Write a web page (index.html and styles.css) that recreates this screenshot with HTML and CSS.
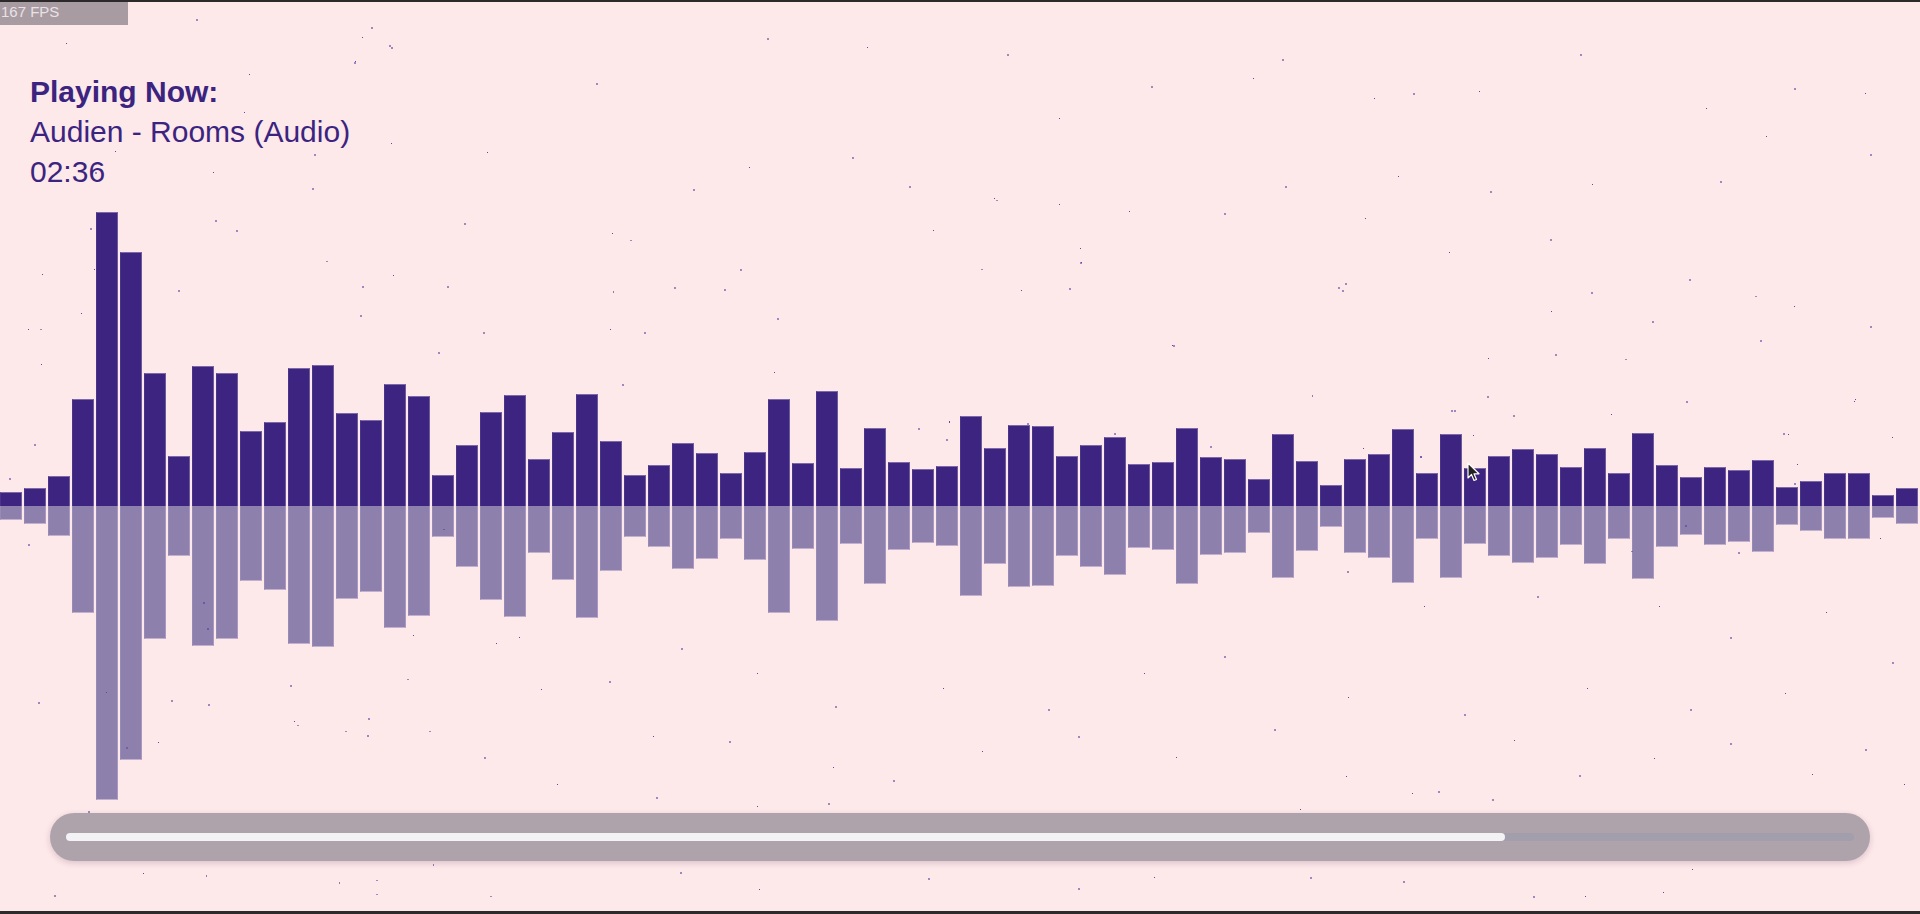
FILE: index.html
```html
<!DOCTYPE html>
<html lang="en">
<head>
<meta charset="utf-8">
<title>Visualizer</title>
<link rel="stylesheet" href="styles.css">
</head>
<body>
<main class="screen">
  <div class="fps">167 FPS</div>
  <section class="info">
    <div class="info-title">Playing Now:</div>
    <div class="info-track">Audien - Rooms (Audio)</div>
    <div class="info-time">02:36</div>
  </section>
  <section class="viz">
    <div class="bars bars-up">
      <div class="bar" style="height:14px"></div><div class="bar" style="height:18px"></div><div class="bar" style="height:30px"></div><div class="bar" style="height:107px"></div><div class="bar" style="height:294px"></div><div class="bar" style="height:254px"></div><div class="bar" style="height:133px"></div><div class="bar" style="height:50px"></div><div class="bar" style="height:140px"></div><div class="bar" style="height:133px"></div><div class="bar" style="height:75px"></div><div class="bar" style="height:84px"></div><div class="bar" style="height:138px"></div><div class="bar" style="height:141px"></div><div class="bar" style="height:93px"></div><div class="bar" style="height:86px"></div><div class="bar" style="height:122px"></div><div class="bar" style="height:110px"></div><div class="bar" style="height:31px"></div><div class="bar" style="height:61px"></div><div class="bar" style="height:94px"></div><div class="bar" style="height:111px"></div>
      <div class="bar" style="height:47px"></div><div class="bar" style="height:74px"></div><div class="bar" style="height:112px"></div><div class="bar" style="height:65px"></div><div class="bar" style="height:31px"></div><div class="bar" style="height:41px"></div><div class="bar" style="height:63px"></div><div class="bar" style="height:53px"></div><div class="bar" style="height:33px"></div><div class="bar" style="height:54px"></div><div class="bar" style="height:107px"></div><div class="bar" style="height:43px"></div><div class="bar" style="height:115px"></div><div class="bar" style="height:38px"></div><div class="bar" style="height:78px"></div><div class="bar" style="height:44px"></div><div class="bar" style="height:37px"></div><div class="bar" style="height:40px"></div><div class="bar" style="height:90px"></div><div class="bar" style="height:58px"></div><div class="bar" style="height:81px"></div><div class="bar" style="height:80px"></div>
      <div class="bar" style="height:50px"></div><div class="bar" style="height:61px"></div><div class="bar" style="height:69px"></div><div class="bar" style="height:42px"></div><div class="bar" style="height:44px"></div><div class="bar" style="height:78px"></div><div class="bar" style="height:49px"></div><div class="bar" style="height:47px"></div><div class="bar" style="height:27px"></div><div class="bar" style="height:72px"></div><div class="bar" style="height:45px"></div><div class="bar" style="height:21px"></div><div class="bar" style="height:47px"></div><div class="bar" style="height:52px"></div><div class="bar" style="height:77px"></div><div class="bar" style="height:33px"></div><div class="bar" style="height:72px"></div><div class="bar" style="height:38px"></div><div class="bar" style="height:50px"></div><div class="bar" style="height:57px"></div><div class="bar" style="height:52px"></div>
      <div class="bar" style="height:39px"></div><div class="bar" style="height:58px"></div><div class="bar" style="height:33px"></div><div class="bar" style="height:73px"></div><div class="bar" style="height:41px"></div><div class="bar" style="height:29px"></div><div class="bar" style="height:39px"></div><div class="bar" style="height:36px"></div><div class="bar" style="height:46px"></div><div class="bar" style="height:19px"></div><div class="bar" style="height:25px"></div><div class="bar" style="height:33px"></div><div class="bar" style="height:33px"></div><div class="bar" style="height:11px"></div><div class="bar" style="height:18px"></div>
    </div>
    <div class="bars bars-down">
      <div class="bar" style="height:14px"></div><div class="bar" style="height:18px"></div><div class="bar" style="height:30px"></div><div class="bar" style="height:107px"></div><div class="bar" style="height:294px"></div><div class="bar" style="height:254px"></div><div class="bar" style="height:133px"></div><div class="bar" style="height:50px"></div><div class="bar" style="height:140px"></div><div class="bar" style="height:133px"></div><div class="bar" style="height:75px"></div><div class="bar" style="height:84px"></div><div class="bar" style="height:138px"></div><div class="bar" style="height:141px"></div><div class="bar" style="height:93px"></div><div class="bar" style="height:86px"></div><div class="bar" style="height:122px"></div><div class="bar" style="height:110px"></div><div class="bar" style="height:31px"></div><div class="bar" style="height:61px"></div><div class="bar" style="height:94px"></div><div class="bar" style="height:111px"></div>
      <div class="bar" style="height:47px"></div><div class="bar" style="height:74px"></div><div class="bar" style="height:112px"></div><div class="bar" style="height:65px"></div><div class="bar" style="height:31px"></div><div class="bar" style="height:41px"></div><div class="bar" style="height:63px"></div><div class="bar" style="height:53px"></div><div class="bar" style="height:33px"></div><div class="bar" style="height:54px"></div><div class="bar" style="height:107px"></div><div class="bar" style="height:43px"></div><div class="bar" style="height:115px"></div><div class="bar" style="height:38px"></div><div class="bar" style="height:78px"></div><div class="bar" style="height:44px"></div><div class="bar" style="height:37px"></div><div class="bar" style="height:40px"></div><div class="bar" style="height:90px"></div><div class="bar" style="height:58px"></div><div class="bar" style="height:81px"></div><div class="bar" style="height:80px"></div>
      <div class="bar" style="height:50px"></div><div class="bar" style="height:61px"></div><div class="bar" style="height:69px"></div><div class="bar" style="height:42px"></div><div class="bar" style="height:44px"></div><div class="bar" style="height:78px"></div><div class="bar" style="height:49px"></div><div class="bar" style="height:47px"></div><div class="bar" style="height:27px"></div><div class="bar" style="height:72px"></div><div class="bar" style="height:45px"></div><div class="bar" style="height:21px"></div><div class="bar" style="height:47px"></div><div class="bar" style="height:52px"></div><div class="bar" style="height:77px"></div><div class="bar" style="height:33px"></div><div class="bar" style="height:72px"></div><div class="bar" style="height:38px"></div><div class="bar" style="height:50px"></div><div class="bar" style="height:57px"></div><div class="bar" style="height:52px"></div>
      <div class="bar" style="height:39px"></div><div class="bar" style="height:58px"></div><div class="bar" style="height:33px"></div><div class="bar" style="height:73px"></div><div class="bar" style="height:41px"></div><div class="bar" style="height:29px"></div><div class="bar" style="height:39px"></div><div class="bar" style="height:36px"></div><div class="bar" style="height:46px"></div><div class="bar" style="height:19px"></div><div class="bar" style="height:25px"></div><div class="bar" style="height:33px"></div><div class="bar" style="height:33px"></div><div class="bar" style="height:12px"></div><div class="bar" style="height:18px"></div>
    </div>
  </section>
  <section class="progress">
    <div class="track"><div class="fill" style="width:80.5%"></div></div>
  </section>

  <svg class="stars" width="1920" height="914" viewBox="0 0 1920 914" aria-hidden="true">
    <g fill="#5b4aa6">
      <rect x="196" y="19" width="2" height="2" opacity=".6"/><rect x="66" y="43" width="1" height="1"/><rect x="371" y="27" width="2" height="2" opacity=".6"/><rect x="362" y="37" width="1" height="1"/><rect x="391" y="47" width="2" height="2" opacity=".6"/><rect x="354" y="62" width="2" height="2" opacity=".6"/><rect x="249" y="74" width="1" height="1"/><rect x="244" y="112" width="1" height="1"/><rect x="115" y="151" width="1" height="1"/><rect x="314" y="154" width="2" height="2" opacity=".6"/><rect x="213" y="172" width="1" height="1"/><rect x="95" y="172" width="2" height="2" opacity=".6"/><rect x="391" y="143" width="1" height="1"/><rect x="312" y="188" width="2" height="2" opacity=".6"/>
      <rect x="9" y="478" width="2" height="2" opacity=".6"/><rect x="34" y="444" width="2" height="2" opacity=".6"/><rect x="42" y="274" width="1" height="1"/><rect x="28" y="329" width="1" height="1"/><rect x="40" y="329" width="2" height="1" opacity=".6"/><rect x="41" y="364" width="1" height="1"/><rect x="81" y="313" width="1" height="1"/><rect x="90" y="228" width="2" height="2" opacity=".6"/><rect x="94" y="269" width="1" height="1"/><rect x="178" y="290" width="2" height="2" opacity=".6"/><rect x="215" y="220" width="2" height="2" opacity=".6"/><rect x="236" y="230" width="2" height="2" opacity=".6"/><rect x="326" y="261" width="2" height="1" opacity=".6"/><rect x="362" y="286" width="2" height="2" opacity=".6"/><rect x="360" y="315" width="2" height="2" opacity=".6"/><rect x="393" y="275" width="1" height="1"/><rect x="447" y="286" width="2" height="2" opacity=".6"/><rect x="438" y="352" width="2" height="2" opacity=".6"/><rect x="464" y="223" width="2" height="2" opacity=".6"/><rect x="483" y="332" width="2" height="2" opacity=".6"/>
      <rect x="630" y="240" width="2" height="1" opacity=".6"/><rect x="613" y="291" width="1" height="2" opacity=".7"/><rect x="674" y="287" width="2" height="2" opacity=".6"/><rect x="724" y="289" width="2" height="2" opacity=".6"/><rect x="610" y="329" width="1" height="1"/><rect x="644" y="332" width="2" height="2" opacity=".6"/><rect x="622" y="384" width="2" height="2" opacity=".6"/><rect x="777" y="318" width="2" height="2" opacity=".6"/><rect x="774" y="372" width="1" height="1"/><rect x="981" y="269" width="2" height="1" opacity=".6"/><rect x="1021" y="290" width="1" height="1"/><rect x="996" y="200" width="2" height="1" opacity=".6"/><rect x="918" y="428" width="2" height="2" opacity=".6"/><rect x="949" y="421" width="1" height="2"/><rect x="946" y="439" width="2" height="2" opacity=".6"/><rect x="1027" y="423" width="2" height="2" opacity=".6"/>
      <rect x="1059" y="204" width="1" height="1"/><rect x="1224" y="213" width="2" height="2" opacity=".6"/><rect x="1365" y="218" width="1" height="1"/><rect x="1080" y="248" width="1" height="1"/><rect x="1081" y="262" width="1" height="1"/><rect x="1069" y="288" width="2" height="2" opacity=".6"/><rect x="1345" y="283" width="2" height="2" opacity=".6"/><rect x="1342" y="290" width="2" height="2" opacity=".6"/><rect x="1449" y="252" width="1" height="1"/><rect x="1550" y="239" width="2" height="2" opacity=".6"/><rect x="1173" y="345" width="2" height="2" opacity=".6"/><rect x="1312" y="395" width="1" height="2" opacity=".7"/><rect x="1488" y="358" width="1" height="1"/><rect x="1555" y="354" width="2" height="2" opacity=".6"/><rect x="1487" y="396" width="2" height="2" opacity=".6"/><rect x="1451" y="410" width="2" height="2" opacity=".6"/><rect x="1513" y="415" width="2" height="2" opacity=".6"/><rect x="1114" y="433" width="2" height="2" opacity=".6"/><rect x="1210" y="446" width="2" height="2" opacity=".6"/><rect x="1363" y="448" width="1" height="1"/><rect x="1420" y="456" width="2" height="2" opacity=".6"/><rect x="1473" y="435" width="1" height="1"/>
      <rect x="1591" y="292" width="2" height="2" opacity=".6"/><rect x="1689" y="279" width="2" height="2" opacity=".6"/><rect x="1755" y="296" width="2" height="1" opacity=".6"/><rect x="1760" y="340" width="2" height="2" opacity=".6"/><rect x="1625" y="359" width="2" height="1" opacity=".6"/><rect x="1686" y="401" width="2" height="2" opacity=".6"/><rect x="1611" y="414" width="1" height="1"/><rect x="1854" y="401" width="1" height="1"/><rect x="1788" y="434" width="1" height="1"/><rect x="1797" y="464" width="1" height="1"/><rect x="1794" y="483" width="2" height="2" opacity=".6"/><rect x="1454" y="410" width="2" height="2" opacity=".6"/><rect x="1420" y="456" width="2" height="2" opacity=".6"/>
      <rect x="28" y="544" width="2" height="2" opacity=".6"/><rect x="38" y="702" width="2" height="2" opacity=".6"/><rect x="106" y="692" width="1" height="1"/><rect x="126" y="747" width="2" height="2" opacity=".6"/><rect x="171" y="700" width="2" height="2" opacity=".6"/><rect x="203" y="602" width="2" height="2" opacity=".7"/><rect x="207" y="628" width="2" height="2" opacity=".7"/><rect x="290" y="685" width="2" height="2" opacity=".6"/><rect x="297" y="725" width="2" height="1" opacity=".6"/><rect x="345" y="731" width="2" height="1" opacity=".6"/><rect x="368" y="718" width="2" height="2" opacity=".6"/><rect x="407" y="679" width="2" height="1" opacity=".6"/><rect x="429" y="731" width="2" height="1" opacity=".6"/><rect x="443" y="529" width="2" height="1" opacity=".7"/><rect x="413" y="635" width="1" height="1"/><rect x="496" y="643" width="1" height="1"/><rect x="88" y="811" width="2" height="2" opacity=".6"/>
      <rect x="1738" y="552" width="2" height="2" opacity=".6"/><rect x="1880" y="538" width="1" height="1"/><rect x="1685" y="525" width="2" height="2" opacity=".7"/><rect x="1631" y="551" width="2" height="1" opacity=".6"/>
      <rect x="143" y="873" width="1" height="1"/><rect x="206" y="875" width="1" height="2" opacity=".7"/><rect x="54" y="895" width="2" height="2" opacity=".6"/><rect x="339" y="882" width="1" height="2" opacity=".7"/><rect x="376" y="880" width="2" height="1" opacity=".6"/><rect x="376" y="894" width="2" height="1" opacity=".6"/><rect x="490" y="896" width="2" height="1" opacity=".6"/><rect x="433" y="864" width="1" height="2" opacity=".7"/><rect x="1412" y="793" width="1" height="1"/><rect x="1492" y="799" width="2" height="2" opacity=".6"/><rect x="1300" y="809" width="1" height="1"/><rect x="1403" y="881" width="2" height="2" opacity=".6"/><rect x="1533" y="896" width="2" height="2" opacity=".6"/><rect x="1663" y="892" width="1" height="1"/>
      <rect x="389" y="45" width="2" height="2" opacity=".6"/><rect x="355" y="61" width="1" height="1"/><rect x="596" y="83" width="2" height="2" opacity=".6"/><rect x="487" y="152" width="1" height="1"/><rect x="767" y="38" width="2" height="2" opacity=".6"/><rect x="867" y="47" width="1" height="1"/><rect x="1007" y="54" width="2" height="2" opacity=".6"/><rect x="1059" y="118" width="1" height="1"/><rect x="1151" y="86" width="2" height="2" opacity=".6"/><rect x="1253" y="78" width="1" height="1"/><rect x="1282" y="59" width="2" height="2" opacity=".6"/><rect x="1374" y="98" width="1" height="1"/><rect x="1413" y="93" width="2" height="2" opacity=".6"/><rect x="1479" y="91" width="1" height="1"/><rect x="1580" y="54" width="2" height="2" opacity=".6"/><rect x="1706" y="108" width="1" height="1"/><rect x="1794" y="88" width="2" height="2" opacity=".6"/><rect x="1865" y="93" width="1" height="1"/><rect x="1870" y="154" width="2" height="2" opacity=".6"/><rect x="1766" y="136" width="1" height="1"/><rect x="1720" y="181" width="2" height="2" opacity=".6"/><rect x="1592" y="184" width="1" height="1"/><rect x="1490" y="191" width="2" height="2" opacity=".6"/><rect x="1398" y="176" width="1" height="1"/><rect x="1285" y="186" width="2" height="2" opacity=".6"/><rect x="1129" y="211" width="1" height="1"/><rect x="909" y="186" width="2" height="2" opacity=".6"/><rect x="994" y="198" width="1" height="1"/><rect x="852" y="157" width="2" height="2" opacity=".6"/><rect x="749" y="167" width="1" height="1"/><rect x="693" y="189" width="2" height="2" opacity=".6"/><rect x="612" y="233" width="1" height="1"/><rect x="740" y="269" width="2" height="2" opacity=".6"/><rect x="933" y="230" width="1" height="1"/><rect x="1080" y="262" width="2" height="2" opacity=".6"/><rect x="1172" y="345" width="1" height="1"/><rect x="1338" y="287" width="2" height="2" opacity=".6"/><rect x="1551" y="311" width="1" height="1"/><rect x="1652" y="321" width="2" height="2" opacity=".6"/><rect x="1794" y="306" width="1" height="1"/><rect x="1870" y="326" width="2" height="2" opacity=".6"/><rect x="1855" y="399" width="1" height="1"/><rect x="1783" y="433" width="2" height="2" opacity=".6"/><rect x="1892" y="437" width="1" height="1"/>
      <rect x="1347" y="571" width="2" height="2" opacity=".6"/><rect x="1424" y="606" width="1" height="1"/><rect x="1537" y="596" width="2" height="2" opacity=".6"/><rect x="1659" y="606" width="1" height="1"/><rect x="1730" y="637" width="2" height="2" opacity=".6"/><rect x="1826" y="612" width="1" height="1"/><rect x="1892" y="662" width="2" height="2" opacity=".6"/><rect x="1785" y="693" width="1" height="1"/><rect x="1690" y="709" width="2" height="2" opacity=".6"/><rect x="1587" y="688" width="1" height="1"/><rect x="1464" y="714" width="2" height="2" opacity=".6"/><rect x="1348" y="697" width="1" height="1"/><rect x="1224" y="656" width="2" height="2" opacity=".6"/><rect x="1144" y="673" width="1" height="1"/><rect x="1048" y="709" width="2" height="2" opacity=".6"/><rect x="943" y="688" width="1" height="1"/><rect x="835" y="706" width="2" height="2" opacity=".6"/><rect x="757" y="673" width="1" height="1"/><rect x="681" y="648" width="2" height="2" opacity=".6"/><rect x="653" y="736" width="1" height="1"/><rect x="729" y="741" width="2" height="2" opacity=".6"/><rect x="833" y="767" width="1" height="1"/><rect x="893" y="780" width="2" height="2" opacity=".6"/><rect x="982" y="751" width="1" height="1"/><rect x="1078" y="736" width="2" height="2" opacity=".6"/><rect x="1176" y="757" width="1" height="1"/><rect x="1274" y="729" width="2" height="2" opacity=".6"/><rect x="1346" y="776" width="1" height="1"/><rect x="1438" y="791" width="2" height="2" opacity=".6"/><rect x="1514" y="740" width="1" height="1"/><rect x="1579" y="775" width="2" height="2" opacity=".6"/><rect x="1654" y="758" width="1" height="1"/><rect x="1730" y="743" width="2" height="2" opacity=".6"/><rect x="1812" y="774" width="1" height="1"/><rect x="1865" y="749" width="2" height="2" opacity=".6"/><rect x="1904" y="784" width="1" height="1"/><rect x="828" y="803" width="2" height="2" opacity=".6"/><rect x="757" y="806" width="1" height="1"/><rect x="656" y="797" width="2" height="2" opacity=".6"/><rect x="557" y="784" width="1" height="1"/><rect x="484" y="757" width="2" height="2" opacity=".6"/><rect x="541" y="689" width="1" height="1"/><rect x="609" y="681" width="2" height="2" opacity=".6"/><rect x="519" y="637" width="1" height="1"/><rect x="367" y="735" width="2" height="2" opacity=".6"/><rect x="294" y="721" width="1" height="1"/><rect x="208" y="704" width="2" height="2" opacity=".6"/><rect x="158" y="742" width="1" height="1"/>
      <rect x="1078" y="888" width="2" height="2" opacity=".6"/><rect x="1154" y="877" width="1" height="1"/><rect x="1310" y="877" width="2" height="2" opacity=".6"/><rect x="1585" y="896" width="1" height="1"/><rect x="928" y="878" width="2" height="2" opacity=".6"/><rect x="759" y="889" width="1" height="1"/><rect x="680" y="872" width="2" height="2" opacity=".6"/><rect x="1692" y="869" width="1" height="1"/>
    </g>
  </svg>

  <svg class="cursor" width="14" height="22" viewBox="0 0 14 22" aria-hidden="true">
    <path d="M1 1 L1 16 L4.5 12.5 L7 18.5 L9.5 17.5 L7 11.8 L12 11.8 Z" fill="#222" stroke="#fff" stroke-width="1.2" stroke-linejoin="round"/>
  </svg>
</main>
</body>
</html>
```

FILE: styles.css
```css
* {
  box-sizing: border-box;
}

html,
body {
  margin: 0;
  padding: 0;
  background: #fde8ea;
}

body {
  font-family: "Liberation Sans", Arial, Helvetica, sans-serif;
  overflow: hidden;
}

.screen {
  position: relative;
  width: 1920px;
  height: 914px;
  display: flex;
  flex-direction: column;
  background: #fde8ea;
  border-top: 2px solid #2b2929;
  border-bottom: 3px solid #2e2a2b;
  overflow: hidden;
}

.fps {
  position: absolute;
  top: 0;
  left: 0;
  width: 128px;
  height: 23px;
  padding-left: 1px;
  background: #a89ba2;
  color: #e9e2e6;
  font-size: 15px;
  line-height: 19px;
  z-index: 3;
}

.info {
  padding: 70px 0 0 30px;
  color: #3b2480;
  font-size: 30px;
  line-height: 40px;
  height: 190px;
  flex: none;
}

.info-title {
  font-weight: 700;
}

.info-time {
  font-weight: 300;
}

.viz {
  display: flex;
  flex-direction: column;
  flex: none;
}

.bars {
  display: flex;
  gap: 2px;
}

.bars-up {
  height: 314px;
  align-items: flex-end;
}

.bars-down {
  height: 300px;
  align-items: flex-start;
}

.bar {
  flex: none;
  width: 22px;
}

.bars-up .bar {
  background: #3c2480;
  border-top: 1px solid #7c6aa8;
  border-right: 1px solid #6c5a9e;
  border-left: 1px solid #4a3488;
}

.bars-down .bar {
  background: #8d80ad;
  border-bottom: 1px solid #c2b0cf;
  border-right: 1px solid #a999c2;
  border-left: 1px solid #978ab6;
}

.progress {
  flex: none;
  margin: 7px 50px 0;
  height: 48px;
  padding: 20px 16px;
  border-radius: 24px;
  background: #afa3ab;
  box-shadow: 0 2px 6px rgba(60, 30, 50, 0.18);
}

.track {
  height: 8px;
  border-radius: 4px;
  background: #a29eac;
  display: flex;
}

.fill {
  height: 8px;
  border-radius: 4px;
  background: #f3f3f5;
}

.stars {
  position: absolute;
  top: -2px;
  left: 0;
  pointer-events: none;
  z-index: 2;
}

.cursor {
  position: absolute;
  left: 1467px;
  top: 460px;
  z-index: 4;
}
```
